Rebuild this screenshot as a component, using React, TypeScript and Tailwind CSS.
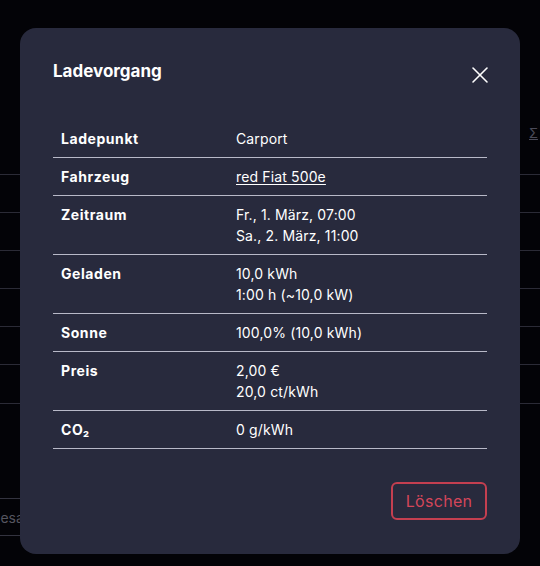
import { X } from "lucide-react";

type Row = { label: string; lines: string[]; link?: boolean };

const rows: Row[] = [
  { label: "Ladepunkt", lines: ["Carport"] },
  { label: "Fahrzeug", lines: ["red Fiat 500e"], link: true },
  { label: "Zeitraum", lines: ["Fr., 1. März, 07:00", "Sa., 2. März, 11:00"] },
  { label: "Geladen", lines: ["10,0 kWh", "1:00 h (~10,0 kW)"] },
  { label: "Sonne", lines: ["100,0% (10,0 kWh)"] },
  { label: "Preis", lines: ["2,00 €", "20,0 ct/kWh"] },
  { label: "CO₂", lines: ["0 g/kWh"] },
];

const bgRows = [174, 212, 250, 288, 326, 364, 403];

export default function App() {
  return (
    <div className="relative h-[566px] w-[540px] overflow-hidden bg-[#030307] font-['Inter',sans-serif]">
      {/* page behind the dialog */}
      <div className="absolute inset-0">
        {bgRows.map((y) => (
          <div
            key={y}
            className="absolute left-0 right-0 h-px bg-[#2b2b36]"
            style={{ top: y }}
          />
        ))}
        <span className="absolute left-[529px] top-[124px] text-[13px] text-[#4a4a58] underline">
          Σ
        </span>
        <div className="absolute left-0 top-[498px] h-[38px] w-[40px] border-y border-[#33333f]">
          <span className="absolute left-[-10px] top-[8px] text-[14px] text-[#55555f]">
            Gesa
          </span>
        </div>
      </div>

      {/* dialog */}
      <div className="absolute left-[20px] top-[28px] flex h-[526px] w-[500px] flex-col rounded-2xl bg-[#282a3d] px-[33px] pb-[34px] pt-[29px] text-white">
        <div className="flex items-start justify-between">
          <h2 className="text-[17px] font-bold leading-7">Ladevorgang</h2>
          <button className="mr-[-7px] mt-[4px] text-white">
            <X size={28} strokeWidth={1.3} />
          </button>
        </div>

        <table className="mt-[31px] w-full border-collapse text-[14px] leading-[21px]">
          <tbody>
            {rows.map((r) => (
              <tr key={r.label} className="border-b border-[#b8b9c8]">
                <td className="w-[183px] px-2 py-2 align-top font-bold tracking-[0.04em]">
                  {r.label}
                </td>
                <td className="px-0 py-2 align-top tracking-[0.01em]">
                  {r.lines.map((l) => (
                    <div key={l} className={r.link ? "underline underline-offset-2" : ""}>
                      {l}
                    </div>
                  ))}
                </td>
              </tr>
            ))}
          </tbody>
        </table>

        <div className="mt-auto flex justify-end">
          <button className="h-[38px] w-[96px] rounded-md border-2 border-[#c43f50] text-[16px] tracking-[0.02em] text-[#d4465a]">
            Löschen
          </button>
        </div>
      </div>
    </div>
  );
}
